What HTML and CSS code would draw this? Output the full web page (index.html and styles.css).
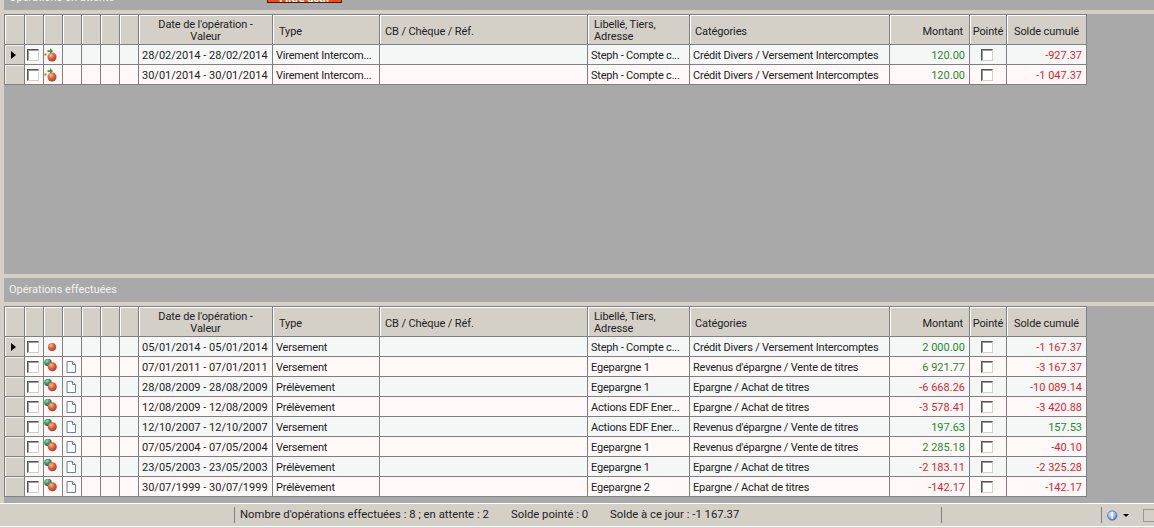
FILE: index.html
```html
<!DOCTYPE html>
<html lang="fr">
<head>
<meta charset="utf-8">
<title>Opérations</title>
<link rel="stylesheet" href="styles.css">
</head>
<body>
<svg class="defs" width="0" height="0" aria-hidden="true">
  <defs>
    <radialGradient id="red" cx="38%" cy="32%" r="70%"><stop offset="0" stop-color="#f8c0a4"/><stop offset=".45" stop-color="#e2683f"/><stop offset="1" stop-color="#a93c22"/></radialGradient>
    <radialGradient id="green" cx="38%" cy="32%" r="70%"><stop offset="0" stop-color="#9fd8b4"/><stop offset=".5" stop-color="#3c9468"/><stop offset="1" stop-color="#1f5f4a"/></radialGradient>
    <radialGradient id="blue" cx="40%" cy="35%" r="70%"><stop offset="0" stop-color="#e8f0fb"/><stop offset=".6" stop-color="#8fb0e0"/><stop offset="1" stop-color="#3c64a8"/></radialGradient>
    <symbol id="i-pending" viewBox="0 0 16 16">
      <path d="M3.500 3.200h2.500V1l3 3-3 3V5H3.500z" fill="#2fa32a"/>
      <path d="M.5 6.500h2v2h-2z" fill="#d8602f"/>
      <circle cx="8" cy="10" r="4.500" fill="url(#red)"/>
    </symbol>
    <symbol id="i-dot" viewBox="0 0 16 16"><circle cx="8" cy="8" r="4" fill="url(#red)"/></symbol>
    <symbol id="i-split" viewBox="0 0 16 16">
      <circle cx="4" cy="3.500" r="3.800" fill="url(#green)"/>
      <circle cx="8.300" cy="7.800" r="4.500" fill="url(#red)"/>
    </symbol>
    <symbol id="i-doc" viewBox="0 0 16 16">
      <path d="M4 2.500h5.500l3 3v8H4z" fill="#f8fafd" stroke="#6f7f9c"/>
      <path d="M9.500 2.500v3h3" fill="#dde6f2" stroke="#6f7f9c"/>
    </symbol>
  </defs>
</svg>
<main class="app">
  <section class="pane pane-top">
    <header class="panel panel-clipped"><span class="panel-title">Opérations en attente</span><span class="filter">Filtre actif</span></header>
    <div class="work work-top">
      <table class="grid">
        <colgroup><col class="c-rh"><col class="c-ic"><col class="c-ic"><col class="c-ic"><col class="c-ic"><col class="c-ic"><col class="c-ic"><col class="c-date"><col class="c-type"><col class="c-ref"><col class="c-lib"><col class="c-cat"><col class="c-amt"><col class="c-pt"><col class="c-amt"></colgroup>
        <thead><tr><th></th><th></th><th></th><th></th><th></th><th></th><th></th><th class="ctr two">Date de l'opération -<br>Valeur</th><th class="lft">Type</th><th class="lft tight">CB / Chèque / Réf.</th><th class="lft two">Libellé, Tiers,<br>Adresse</th><th class="lft tight">Catégories</th><th class="rgt">Montant</th><th class="ctr">Pointé</th><th class="ctr">Solde cumulé</th></tr></thead>
        <tbody>
          <tr class="odd"><th class="rh"><span class="cur"></span></th><td class="ic"><span class="cb"></span></td><td class="ic"><svg class="icon"><use href="#i-pending"/></svg></td><td></td><td></td><td></td><td></td><td class="date">28/02/2014 - 28/02/2014</td><td>Virement Intercom...</td><td></td><td>Steph - Compte c...</td><td>Crédit Divers / Versement Intercomptes</td><td class="num pos">120.00</td><td class="ic"><span class="cb"></span></td><td class="num neg">-927.37</td></tr>
          <tr class="even"><th class="rh"></th><td class="ic"><span class="cb"></span></td><td class="ic"><svg class="icon"><use href="#i-pending"/></svg></td><td></td><td></td><td></td><td></td><td class="date">30/01/2014 - 30/01/2014</td><td>Virement Intercom...</td><td></td><td>Steph - Compte c...</td><td>Crédit Divers / Versement Intercomptes</td><td class="num pos">120.00</td><td class="ic"><span class="cb"></span></td><td class="num neg">-1 047.37</td></tr>
        </tbody>
      </table>
    </div>
  </section>
  <section class="pane">
    <header class="panel"><span class="panel-title">Opérations effectuées</span></header>
    <div class="work work-bottom">
      <table class="grid">
        <colgroup><col class="c-rh"><col class="c-ic"><col class="c-ic"><col class="c-ic"><col class="c-ic"><col class="c-ic"><col class="c-ic"><col class="c-date"><col class="c-type"><col class="c-ref"><col class="c-lib"><col class="c-cat"><col class="c-amt"><col class="c-pt"><col class="c-amt"></colgroup>
        <thead><tr><th></th><th></th><th></th><th></th><th></th><th></th><th></th><th class="ctr two">Date de l'opération -<br>Valeur</th><th class="lft">Type</th><th class="lft tight">CB / Chèque / Réf.</th><th class="lft two">Libellé, Tiers,<br>Adresse</th><th class="lft tight">Catégories</th><th class="rgt">Montant</th><th class="ctr">Pointé</th><th class="ctr">Solde cumulé</th></tr></thead>
        <tbody>
          <tr class="odd"><th class="rh"><span class="cur"></span></th><td class="ic"><span class="cb"></span></td><td class="ic"><svg class="icon"><use href="#i-dot"/></svg></td><td></td><td></td><td></td><td></td><td class="date">05/01/2014 - 05/01/2014</td><td>Versement</td><td></td><td>Steph - Compte c...</td><td>Crédit Divers / Versement Intercomptes</td><td class="num pos">2 000.00</td><td class="ic"><span class="cb"></span></td><td class="num neg">-1 167.37</td></tr>
          <tr class="even"><th class="rh"></th><td class="ic"><span class="cb"></span></td><td class="ic"><svg class="icon"><use href="#i-split"/></svg></td><td class="ic"><svg class="icon"><use href="#i-doc"/></svg></td><td></td><td></td><td></td><td class="date">07/01/2011 - 07/01/2011</td><td>Versement</td><td></td><td>Egepargne 1</td><td>Revenus d'épargne / Vente de titres</td><td class="num pos">6 921.77</td><td class="ic"><span class="cb"></span></td><td class="num neg">-3 167.37</td></tr>
          <tr class="odd"><th class="rh"></th><td class="ic"><span class="cb"></span></td><td class="ic"><svg class="icon"><use href="#i-split"/></svg></td><td class="ic"><svg class="icon"><use href="#i-doc"/></svg></td><td></td><td></td><td></td><td class="date">28/08/2009 - 28/08/2009</td><td>Prélèvement</td><td></td><td>Egepargne 1</td><td>Epargne / Achat de titres</td><td class="num neg">-6 668.26</td><td class="ic"><span class="cb"></span></td><td class="num neg">-10 089.14</td></tr>
          <tr class="even"><th class="rh"></th><td class="ic"><span class="cb"></span></td><td class="ic"><svg class="icon"><use href="#i-split"/></svg></td><td class="ic"><svg class="icon"><use href="#i-doc"/></svg></td><td></td><td></td><td></td><td class="date">12/08/2009 - 12/08/2009</td><td>Prélèvement</td><td></td><td>Actions EDF Ener...</td><td>Epargne / Achat de titres</td><td class="num neg">-3 578.41</td><td class="ic"><span class="cb"></span></td><td class="num neg">-3 420.88</td></tr>
          <tr class="odd"><th class="rh"></th><td class="ic"><span class="cb"></span></td><td class="ic"><svg class="icon"><use href="#i-split"/></svg></td><td class="ic"><svg class="icon"><use href="#i-doc"/></svg></td><td></td><td></td><td></td><td class="date">12/10/2007 - 12/10/2007</td><td>Versement</td><td></td><td>Actions EDF Ener...</td><td>Revenus d'épargne / Vente de titres</td><td class="num pos">197.63</td><td class="ic"><span class="cb"></span></td><td class="num pos">157.53</td></tr>
          <tr class="even"><th class="rh"></th><td class="ic"><span class="cb"></span></td><td class="ic"><svg class="icon"><use href="#i-split"/></svg></td><td class="ic"><svg class="icon"><use href="#i-doc"/></svg></td><td></td><td></td><td></td><td class="date">07/05/2004 - 07/05/2004</td><td>Versement</td><td></td><td>Egepargne 1</td><td>Revenus d'épargne / Vente de titres</td><td class="num pos">2 285.18</td><td class="ic"><span class="cb"></span></td><td class="num neg">-40.10</td></tr>
          <tr class="odd"><th class="rh"></th><td class="ic"><span class="cb"></span></td><td class="ic"><svg class="icon"><use href="#i-split"/></svg></td><td class="ic"><svg class="icon"><use href="#i-doc"/></svg></td><td></td><td></td><td></td><td class="date">23/05/2003 - 23/05/2003</td><td>Prélèvement</td><td></td><td>Egepargne 1</td><td>Epargne / Achat de titres</td><td class="num neg">-2 183.11</td><td class="ic"><span class="cb"></span></td><td class="num neg">-2 325.28</td></tr>
          <tr class="even"><th class="rh"></th><td class="ic"><span class="cb"></span></td><td class="ic"><svg class="icon"><use href="#i-split"/></svg></td><td class="ic"><svg class="icon"><use href="#i-doc"/></svg></td><td></td><td></td><td></td><td class="date">30/07/1999 - 30/07/1999</td><td>Prélèvement</td><td></td><td>Egepargne 2</td><td>Epargne / Achat de titres</td><td class="num neg">-142.17</td><td class="ic"><span class="cb"></span></td><td class="num neg">-142.17</td></tr>
        </tbody>
      </table>
    </div>
  </section>
  <footer class="status">
    <span class="st st-lead"></span>
    <span class="st st-count">Nombre d'opérations effectuées : 8 ; en attente : 2</span>
    <span class="st st-point">Solde pointé : 0</span>
    <span class="st st-day">Solde à ce jour : -1 167.37</span>
    <span class="st st-blank"></span>
    <span class="st st-info">
      <svg class="info" viewBox="0 0 14 14"><circle cx="7" cy="7" r="6.300" fill="url(#blue)" stroke="#3a5f9f" stroke-width=".8"/><rect x="6" y="2.500" width="2" height="9" fill="#fff"/></svg>
      <span class="drop"></span>
      <span class="box"></span>
    </span>
  </footer>
</main>
</body>
</html>
```
FILE: styles.css
```css
* { box-sizing: border-box; }
html, body { margin: 0; padding: 0; }
body {
  width: 1154px;
  height: 528px;
  overflow: hidden;
  background: #d4d0c8;
  font-family: Roboto, "Liberation Sans", Arial, sans-serif;
  font-size: 11px;
  color: #222;
}
.defs { display: block; height: 0; }
.app { display: flex; flex-direction: column; height: 528px; }
.pane { display: flex; flex-direction: column; padding-left: 4px; }
.panel {
  display: flex;
  align-items: center;
  height: 24px;
  padding-left: 5px;
  background: #a9a9a9;
  color: #f2f2f2;
}
.panel-title { width: 258px; flex: none; padding-bottom: 2px; }
.panel-clipped { margin-top: -14px; }
.filter {
  align-self: flex-start;
  width: 75px;
  height: 17px;
  padding-top: 6px;
  line-height: 12px;
  text-align: center;
  background: #ff4a0c;
  border: 1px solid #222;
  color: #fff;
  font-weight: bold;
}
.work { background: #a9a9a9; margin-top: 4px; }
.work-top { height: 260px; }
.work-bottom { height: 197px; }
.pane-top { margin-bottom: 4px; }

.grid {
  table-layout: fixed;
  border-collapse: separate;
  border-spacing: 0;
  width: 1083px;
  border-top: 1px solid #808080;
  border-left: 1px solid #808080;
}
.c-rh { width: 20px; }
.c-ic { width: 19px; }
.c-date { width: 134px; }
.c-type { width: 107px; }
.c-ref { width: 208px; }
.c-lib { width: 102px; }
.c-cat { width: 200px; }
.c-amt { width: 80px; }
.c-pt { width: 37px; }

.grid thead th {
  height: 30px;
  padding: 5px 2px 0;
  background: #d4d0c8;
  border-right: 1px solid #808080;
  border-bottom: 1px solid #808080;
  box-shadow: inset 1px 1px 0 #fff;
  font-weight: normal;
  line-height: 12px;
  letter-spacing: -0.1px;
  color: #222;
}
.grid thead .two { padding-top: 2px; }
.grid thead .ctr { text-align: center; }
.grid thead .lft { text-align: left; padding-left: 6px; }
.grid thead .tight { padding-left: 5px; }
.grid thead .rgt { text-align: right; padding-right: 6px; }

.grid tbody td, .grid tbody th {
  height: 20px;
  padding: 1px 3px 0;
  border-right: 1px solid #808080;
  border-bottom: 1px solid #808080;
  font-weight: normal;
  white-space: nowrap;
  overflow: hidden;
  letter-spacing: -0.2px;
  color: #222;
}
.odd td { background: #f5f7f7; }
.even td { background: #fff8f8; }
.grid tbody .rh {
  background: #d4d0c8;
  box-shadow: inset 1px 1px 0 #f4f3ef;
  padding: 0;
  text-align: left;
}
.grid tbody .ic { padding: 0 2px 0 0; line-height: 0; }
.grid tbody .date { letter-spacing: 0; }
.grid tbody .num { text-align: right; padding-right: 4px; letter-spacing: 0; }
.grid tbody .pos { color: #1f8a2e; }
.grid tbody .neg { color: #dc1f2b; }
.cur {
  display: block;
  width: 0;
  height: 0;
  margin-left: 6px;
  border-left: 5px solid #000;
  border-top: 4.5px solid transparent;
  border-bottom: 4.5px solid transparent;
}
.cb {
  display: block;
  width: 12px;
  height: 12px;
  margin: 0 auto;
  background: #fff;
  border: 1px solid #d4d0c8;
  border-top-color: #555;
  border-left-color: #555;
  box-shadow: inset 1px 1px 0 #9a9a9a;
}
.icon { display: block; width: 16px; height: 16px; margin: 0 auto; }

.status {
  display: flex;
  align-items: center;
  height: 24px;
  background: #d4d0c8;
  border-top: 1px solid #fff;
  border-bottom: 1px solid #fff;
  font-size: 11.3px;
  color: #222;
}
.st { display: block; flex: none; height: 16px; line-height: 15px; white-space: nowrap; }
.st-lead { width: 234px; }
.st-count { width: 277px; padding-left: 5px; border-left: 1px solid #808080; }
.st-point { width: 99px; }
.st-day { width: 331px; }
.st-blank { width: 160px; border-left: 1px solid #808080; }
.st-info { display: flex; align-items: center; width: 53px; padding-left: 5px; border-left: 1px solid #808080; }
.info { width: 13px; height: 13px; }
.drop {
  width: 0;
  height: 0;
  margin-left: 5px;
  border-top: 3px solid #000;
  border-left: 3px solid transparent;
  border-right: 3px solid transparent;
}
.box {
  width: 14px;
  height: 13px;
  margin-left: 14px;
  border: 1px solid #999;
  border-right: 0;
}
```
